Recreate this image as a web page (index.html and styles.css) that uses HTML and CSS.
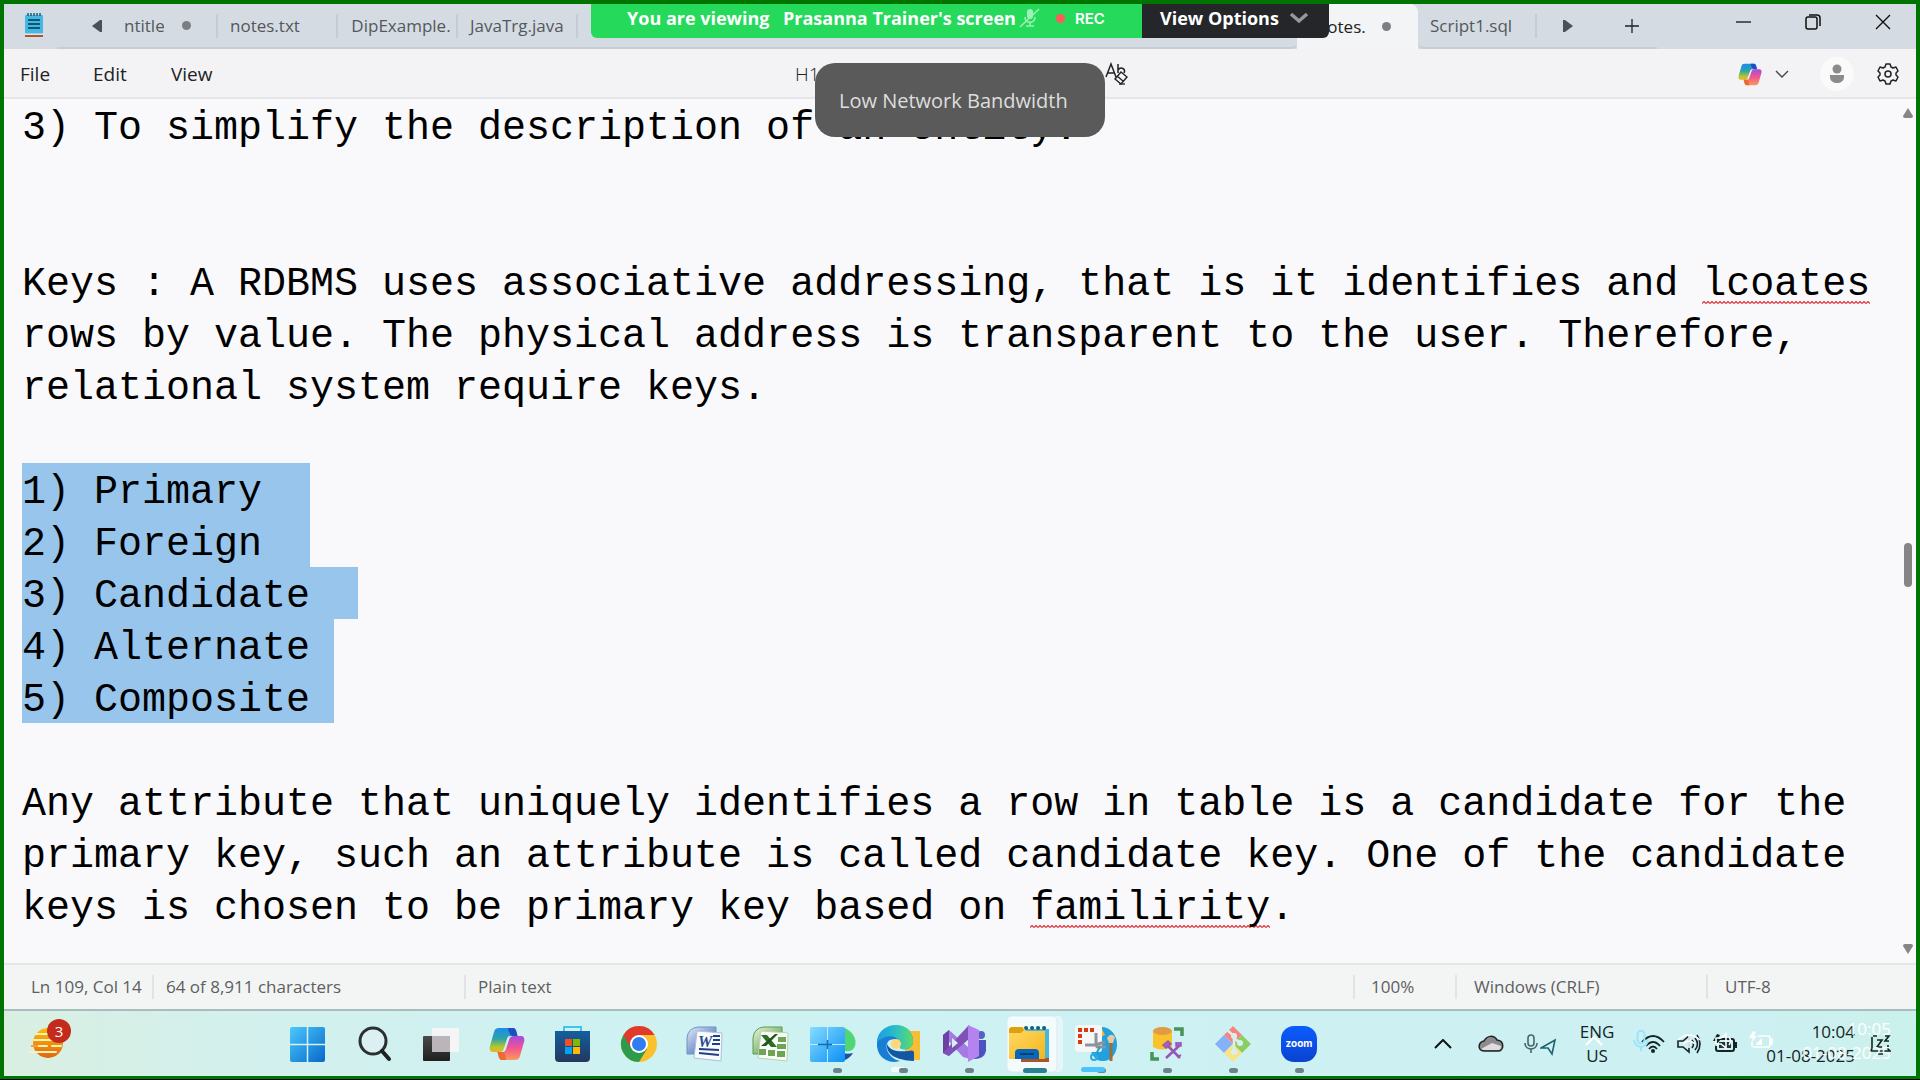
FILE: index.html
```html
<!DOCTYPE html>
<html lang="en">
<head>
<meta charset="utf-8">
<title>notes.txt - Notepad</title>
<link rel="stylesheet" href="styles.css">
</head>
<body>
<svg class="defs" width="0" height="0" aria-hidden="true">
  <defs>
    <linearGradient id="win" x1="0" y1="0" x2="1" y2="1"><stop offset="0" stop-color="#4cc8fb"/><stop offset="1" stop-color="#0669cb"/></linearGradient>
    <linearGradient id="winlight" x1="0" y1="0" x2="1" y2="1"><stop offset="0" stop-color="#86dcff"/><stop offset="1" stop-color="#0b90f5"/></linearGradient>
    <linearGradient id="copa" x1="0" y1="0" x2="0" y2="1"><stop offset="0" stop-color="#1b8de8"/><stop offset=".45" stop-color="#2fa3a8"/><stop offset=".8" stop-color="#b6c92c"/><stop offset="1" stop-color="#e9b52a"/></linearGradient>
    <linearGradient id="copb" x1="0" y1="0" x2="0" y2="1"><stop offset="0" stop-color="#a34be0"/><stop offset=".5" stop-color="#f0568f"/><stop offset="1" stop-color="#fb9a5a"/></linearGradient>
    <linearGradient id="sun" x1="0" y1="0" x2="0" y2="1"><stop offset="0" stop-color="#fcbf0a"/><stop offset="1" stop-color="#e0650f"/></linearGradient>
    <linearGradient id="store" x1="0" y1="0" x2="0" y2="1"><stop offset="0" stop-color="#13609f"/><stop offset="1" stop-color="#25365f"/></linearGradient>
    <linearGradient id="edgeg" x1="0" y1="0" x2="1" y2="0"><stop offset="0" stop-color="#1b9ce2"/><stop offset=".55" stop-color="#2ec0c4"/><stop offset="1" stop-color="#5fdc64"/></linearGradient>
    <linearGradient id="folder" x1="0" y1="0" x2="1" y2="1"><stop offset="0" stop-color="#ffdb66"/><stop offset="1" stop-color="#f5b51c"/></linearGradient>
    <linearGradient id="word" x1="0" y1="0" x2="1" y2="1"><stop offset="0" stop-color="#e2edfa"/><stop offset="1" stop-color="#2a55a8"/></linearGradient>
    <linearGradient id="excel" x1="0" y1="0" x2="1" y2="1"><stop offset="0" stop-color="#eaf6df"/><stop offset="1" stop-color="#3f8a2e"/></linearGradient>
    <linearGradient id="dark" x1="0" y1="0" x2="0" y2="1"><stop offset="0" stop-color="#4a4a4a"/><stop offset="1" stop-color="#1f1f1f"/></linearGradient>
    <linearGradient id="zoomg" x1="0" y1="0" x2="0" y2="1"><stop offset="0" stop-color="#0b5cff"/><stop offset="1" stop-color="#0a43cf"/></linearGradient>
    <symbol id="copilot" viewBox="0 0 36 34">
      <path d="M10 1h14c2 0 3 2 3.500 4l1 4h-7c-2 0-3 1-3.500 3l-3 9c-1 3-2 4-5 4H4c-3 0-4-3-3-6L5 5c1-3 2-4 5-4z" fill="url(#copa)"/>
      <path d="M19 1h5c2 0 3 2 3.500 4l1 4h-5c-3-1-4-5-4.500-8z" fill="#1d4fc0"/>
      <path d="M26 33H13c-2 0-3-2-3.500-4l-1-4h5c2 0 3-1 3.500-3l3-9c1-3 2-4 5-4h7c3 0 4 3 3 6l-4 14c-1 3-2 4-5 4z" fill="url(#copb)"/>
      <path d="M17 33h-4c-2 0-3-2-3.500-4l-1-4h5c3 1 3 5 3.500 8z" fill="#ee6a35"/>
    </symbol>
    <symbol id="mic" viewBox="0 0 14 20">
      <rect x="4" y="1" width="6" height="11" rx="3" fill="none" stroke="currentColor" stroke-width="1.600"/>
      <path d="M1 9c0 8 12 8 12 0M7 15v4" fill="none" stroke="currentColor" stroke-width="1.600"/>
    </symbol>
  </defs>
</svg>

<div class="screen">
  <header class="titlebar">
    <svg class="app-icon" viewBox="0 0 20 26" width="20" height="26"><rect x="1" y="3" width="18" height="19" rx="1" fill="#44b8e0"/><path d="M4 1v3M7 1v3M10 1v3M13 1v3M16 1v3" stroke="#155d7c" stroke-width="1.500"/><path d="M4 8h12M4 12h12M4 16h12" stroke="#0d5877" stroke-width="2"/><path d="M1 22h18" stroke="#eee" stroke-width="1"/><path d="M1 24h18" stroke="#a8582e" stroke-width="2"/></svg>
    <nav class="tabs" aria-label="Open files">
      <button class="scroll-tabs back" aria-label="Scroll tabs left"><svg viewBox="0 0 12 12" width="12" height="12"><path d="M11 0v12H9L1 6 9 0z" fill="#4d5155"/></svg></button>
      <button class="tab t1"><span class="clip">ntitle</span><i class="unsaved"></i></button>
      <button class="tab t2">notes.txt</button>
      <button class="tab t3"><span class="clip">DipExample.</span></button>
      <button class="tab t4">JavaTrg.java</button>
      <span class="tab-fill"></span>
    </nav>
    <button class="tab active"><span class="clip">otes.</span><i class="unsaved"></i></button>
    <div class="tabs right">
      <button class="tab t5">Script1.sql</button>
      <button class="scroll-tabs" aria-label="Scroll tabs right"><svg viewBox="0 0 12 12" width="12" height="12"><path d="M1 0v12h2l8-6-8-6z" fill="#4d5155"/></svg></button>
      <button class="new-tab" aria-label="New tab"><svg viewBox="0 0 16 16" width="16" height="16"><path d="M8 1v14M1 8h14" stroke="#222" stroke-width="1.300"/></svg></button>
    </div>
    <div class="window-controls">
      <button aria-label="Minimize"><svg viewBox="0 0 18 18" width="18" height="18"><path d="M2 9h15" stroke="#111" stroke-width="1.300"/></svg></button>
      <button aria-label="Restore"><svg viewBox="0 0 18 18" width="18" height="18"><rect x="2" y="4" width="11" height="12" rx="2" fill="none" stroke="#111" stroke-width="1.500"/><path d="M5 2h8q3 0 3 3v8" fill="none" stroke="#111" stroke-width="1.500"/></svg></button>
      <button aria-label="Close"><svg viewBox="0 0 18 18" width="18" height="18"><path d="M2 2l14 14M16 2L2 16" stroke="#111" stroke-width="1.400"/></svg></button>
    </div>
  </header>

  <div class="toolbar">
    <button class="menu file">File</button>
    <button class="menu edit">Edit</button>
    <button class="menu view">View</button>
    <div class="format">
      <button class="heading">H1</button>
      <button class="clear" aria-label="Clear formatting"><svg viewBox="0 0 24 24" width="24" height="24"><path d="M1 15L6 2l5 13M3 11h6M13 2v9M13 8c3-4 8-1 6 3" fill="none" stroke="#222" stroke-width="1.500"/><path d="M16 10l6 5-6 7-6-5zM12 14l6 5" fill="none" stroke="#222" stroke-width="1.400"/><path d="M14 22h6" stroke="#222" stroke-width="1.300"/></svg></button>
    </div>
    <div class="tools">
      <button class="copilot" aria-label="Copilot"><svg width="24" height="23"><use href="#copilot"/></svg><svg viewBox="0 0 14 8" width="14" height="8"><path d="M1 1l6 6 6-6" fill="none" stroke="#444" stroke-width="1.400"/></svg></button>
      <button class="account" aria-label="Account"><svg viewBox="0 0 16 20" width="16" height="20"><circle cx="8" cy="5" r="4.500" fill="#8b8b8b"/><path d="M1 11h14v2c0 8-14 8-14 0z" fill="#8b8b8b"/></svg></button>
      <button aria-label="Settings"><svg viewBox="0 0 24 24" width="24" height="24"><path d="M10 2h4l1 3 2 1 3-1 2 4-2 2v2l2 2-2 4-3-1-2 1-1 3h-4l-1-3-2-1-3 1-2-4 2-2v-2L2 9l2-4 3 1 2-1z" fill="none" stroke="#222" stroke-width="1.500" stroke-linejoin="round"/><circle cx="12" cy="12" r="3" fill="none" stroke="#222" stroke-width="1.500"/></svg></button>
    </div>
  </div>

  <main class="editor">
    <div class="text">
      <p>3) To simplify the description of an entity.</p>
      <p><br></p>
      <p><br></p>
      <p>Keys : A RDBMS uses associative addressing, that is it identifies and <span class="typo">lcoates</span> rows by value. The physical address is transparent to the user. Therefore, relational system require keys.</p>
      <p><br></p>
      <p class="selected">1) Primary  </p>
      <p class="selected">2) Foreign  </p>
      <p class="selected">3) Candidate  </p>
      <p class="selected">4) Alternate </p>
      <p class="selected">5) Composite </p>
      <p><br></p>
      <p>Any attribute that uniquely identifies a row in table is a candidate for the primary key, such an attribute is called candidate key. One of the candidate keys is chosen to be primary key based on <span class="typo">familirity</span>.</p>
    </div>
    <div class="scrollbar">
      <svg viewBox="0 0 12 10" width="12" height="10"><path d="M6 0l5 8q0 2-2 2H3q-2 0-2-2z" fill="#868686"/></svg>
      <span class="track"><span class="thumb"></span></span>
      <svg viewBox="0 0 12 10" width="12" height="10"><path d="M6 10l5-8q0-2-2-2H3Q1 0 1 2z" fill="#868686"/></svg>
    </div>
  </main>

  <footer class="status">
    <span class="pos">Ln 109, Col 14</span>
    <span class="count">64 of 8,911 characters</span>
    <span class="kind">Plain text</span>
    <span class="scale">100%</span>
    <span class="eol">Windows (CRLF)</span>
    <span class="enc">UTF-8</span>
  </footer>

  <div class="taskbar">
    <button class="widgets" aria-label="Widgets">
      <svg viewBox="0 0 44 44" width="44" height="44"><circle cx="20" cy="26" r="15" fill="url(#sun)"/><path d="M8 17h14M6 23h24M6 29h13M24 29h9M2 35h26" stroke="#fff0b8" stroke-width="2" stroke-linecap="round"/><path d="M3 29h7" stroke="#f5a23a" stroke-width="2"/></svg>
      <span class="badge">3</span>
    </button>
    <nav class="apps" aria-label="Taskbar">
      <button aria-label="Start"><svg viewBox="0 0 66 64"><rect x="15" y="16" width="35" height="35" rx="2" fill="url(#win)"/><path d="M32.500 16v35M15 33.500h35" stroke="#d3f2f4" stroke-width="1.500"/></svg></button>
      <button aria-label="Search"><svg viewBox="0 0 66 64"><circle cx="32" cy="30" r="13" fill="#dceff2" stroke="#2b2f31" stroke-width="3"/><path d="M41 40l7 8" stroke="#1f2224" stroke-width="4" stroke-linecap="round"/></svg></button>
      <button aria-label="Task view"><svg viewBox="0 0 66 64"><rect x="16" y="25" width="27" height="25" rx="1" fill="url(#dark)"/><rect x="25" y="17" width="27" height="24" rx="1" fill="#f6f5f6"/><path d="M25 25h18v16H25z" fill="#b9b5b8"/></svg></button>
      <button aria-label="Copilot"><svg viewBox="0 0 66 64"><use href="#copilot" x="16" y="16" width="36" height="34"/></svg></button>
      <button aria-label="Microsoft Store"><svg viewBox="0 0 66 64"><path d="M25 21v-5h17v5" fill="none" stroke="#3fc3ef" stroke-width="2"/><path d="M16 20h35v27q0 4-4 4H20q-4 0-4-4z" fill="url(#store)"/><path d="M26 28h7v7h-7z" fill="#f25022"/><path d="M34 28h7v7h-7z" fill="#7fba00"/><path d="M26 36h7v7h-7z" fill="#00a4ef"/><path d="M34 36h7v7h-7z" fill="#ffb900"/></svg></button>
      <button aria-label="Chrome"><svg viewBox="0 0 66 64"><circle cx="34" cy="33" r="18" fill="#fbc02d"/><path d="M34 33L18.400 24A18 18 0 0 0 34 51l8-13z" fill="#2e9a4b"/><path d="M18.400 24A18 18 0 0 1 49.600 24H34v9l-8 4z" fill="#e03a2f"/><circle cx="34" cy="33" r="9" fill="#fff"/><circle cx="34" cy="33" r="7" fill="#2f7df0"/></svg></button>
      <button aria-label="Word"><svg viewBox="0 0 66 64"><path d="M27 16h18v27H16V27q1-10 11-11z" fill="url(#word)" stroke="#6f92c4"/><path d="M26 20l25 2-1 28-27-3z" fill="#f8fafc" stroke="#aac0df"/><path d="M42 25h7M42 29h7M41 33h8M28 38l20 1M28 42l20 2" stroke="#223e82" stroke-width="2"/><text x="27" y="36" class="word-w">W</text></svg></button>
      <button aria-label="Excel"><svg viewBox="0 0 66 64"><path d="M27 16h18v27H16V27q1-10 11-11z" fill="url(#excel)" stroke="#5e9a48"/><path d="M24 20l27 2-1 28-29-3z" fill="#f8fbf6" stroke="#b8d2ae"/><path d="M41 26h8v5h-8zM40 33h9v5h-9zM22 38h7v6h-7zM31 39h7v6h-7zM40 40h8v6h-8z" fill="#6ea453"/><path d="M24 24h6l10 12h-6z" fill="#2d6e24"/><path d="M38 23L24 35h5l12-12z" fill="#1f5619"/></svg></button>
      <button aria-label="Windows apps"><svg viewBox="0 0 66 64"><path d="M42 17c8 4 12 11 10 18-2 5-7 6-10 5z" fill="#4fd675"/><path d="M25 50c11 2 20 0 25-8-7 2-14-1-25-2z" fill="#17529f"/><rect x="7" y="16" width="35" height="35" rx="2" fill="url(#winlight)"/><path d="M24.500 16v35M7 33.500h35" stroke="#b9ecfd"/><path d="M15 33.500h14M24.500 29v9" stroke="#176eae" stroke-width="1.500"/><rect x="30" y="57" width="9" height="5" rx="2.500" fill="#6b8489"/></svg></button>
      <button aria-label="Edge"><svg viewBox="0 0 66 64"><path d="M36 20h15v29H36z" fill="#f7bd35"/><path d="M8 32C9 10 44 8 44 30c0 8-8 10-13 7 0-8-5-10-10-8-7 4-3 18 10 21C17 54 7 44 8 32z" fill="#187ed5"/><path d="M8 31C9 9 44 8 44 30c0 8-8 10-13 7 3-9-9-18-23-6z" fill="url(#edgeg)"/><path d="M18 33c-1 10 8 16 27 17v-8c0-3-2-3-6-2-10 1-18 0-21-7z" fill="#1257a4"/><circle cx="27" cy="33" r="5" fill="#ffd777"/><rect x="22" y="56" width="14" height="5" rx="2.500" fill="#f4fbfc"/><rect x="30" y="57" width="9" height="5" rx="2.500" fill="#6b8489"/></svg></button>
      <button aria-label="Visual Studio"><svg viewBox="0 0 66 64"><circle cx="46" cy="24" r="4" fill="#5661c7"/><path d="M42 29h9v11q-2 9-14 8z" fill="#4a52bd"/><path d="M8 24l6-5 20 18 1 11-7-2z" fill="#a57be3"/><path d="M8 24v18l6 3V19z" fill="#6d41a3"/><path d="M14 45l20-17V14L8 42z" fill="#8051b9"/><path d="M33 14l11 5v26l-11 6z" fill="#b483ef"/><path d="M17 27v10l6-5z" fill="#d5f1f3"/><rect x="30" y="57" width="9" height="5" rx="2.500" fill="#6b8489"/></svg></button>
      <button aria-label="File Explorer"><svg viewBox="0 0 66 64"><rect x="12" y="5" width="50" height="56" rx="5" fill="#e5f6f8"/><rect x="6" y="5" width="50" height="56" rx="5" fill="#f4fbfd" stroke="#d9ebee"/><path d="M20 18h28v30H20z" fill="#45b7dd"/><path d="M20 49h28" stroke="#a8552c" stroke-width="4"/><path d="M25 17h.1M31 17h.1M37 17h.1M43 17h.1" stroke="#165f80" stroke-width="4" stroke-linecap="round"/><path d="M10 16h12l3 4h19v28H8V18z" fill="url(#folder)"/><path d="M10 16h11l2 3-3 3H8v-4z" fill="#dfa009"/><path d="M14 48v-6q0-4 4-4h16q4 0 4 4v6z" fill="#0967b8"/><path d="M19 43h14" stroke="#063f76" stroke-width="2"/><rect x="22" y="57" width="24" height="5" rx="2.500" fill="#2b8190"/></svg></button>
      <button aria-label="Snipping Tool"><svg viewBox="0 0 66 64"><path d="M29 17c10-4 22 4 21 18-1 10-8 16-15 15-7 0-12-8-12-16z" fill="#23a0df"/><path d="M35 18l3 6-5 2z" fill="#f4ba23"/><path d="M44 50V28" stroke="#a76b31" stroke-width="3"/><path d="M40 27q4-6 8-1l-2 6h-4z" fill="#e8c99d"/><rect x="8" y="14" width="27" height="27" rx="3" fill="#f5f6f7"/><path d="M11 17h4v4h-4zM17 17h4v4h-4zM23 17h4v4h-4zM11 23h4v4h-4zM11 29h4v4h-4z" fill="#d33c11"/><path d="M29 22v11q0 4 4 3h6M18 34h10l10-3" fill="none" stroke="#8d959a" stroke-width="3"/><circle cx="27" cy="46" r="3" fill="none" stroke="#2aaae3" stroke-width="2"/><path d="M29 43l4-7" stroke="#279bd7" stroke-width="2"/><rect x="30" y="57" width="9" height="5" rx="2.500" fill="#6b8489"/><rect x="14" y="56" width="24" height="5" rx="2.500" fill="#4cc2ff"/></svg></button>
      <button aria-label="SQL Server Management Studio"><svg viewBox="0 0 66 64"><path d="M20 20v16q9 5 19 0V20z" fill="#f9c42a"/><ellipse cx="29.500" cy="20" rx="9.500" ry="4" fill="#e39a46"/><path d="M41 18h8v7M19 41v7h7" fill="none" stroke="#459457" stroke-width="3.500"/><path d="M33 47l13-12M34 34l13 13" stroke="#9556b6" stroke-width="2.500"/><path d="M30 34l5-4 3 3-5 4zM43 31v4h5v-4M44 46l4-2" fill="#a561c3" stroke="#9556b6" stroke-width="1.500"/><rect x="30" y="57" width="9" height="5" rx="2.500" fill="#6b8489"/></svg></button>
      <button aria-label="Git"><svg viewBox="0 0 66 64"><path d="M34 15l9 9-9 9-9-9z" fill="#fa837f"/><path d="M25 24l9 9-9 9-9-9z" fill="#86b0f7"/><path d="M43 24l9 9-9 9-9-9z" fill="#8bce61"/><path d="M34 33l9 9-9 9-9-9z" fill="#fae286"/><path d="M28 19l7 6v16M35 27l6 5" fill="none" stroke="#d7f0ef" stroke-width="2.500"/><path d="M35 25h.1M41 32h.1M35 41h.1" stroke="#d7f0ef" stroke-width="6" stroke-linecap="round"/><rect x="30" y="57" width="9" height="5" rx="2.500" fill="#6b8489"/></svg></button>
      <button aria-label="Zoom"><svg viewBox="0 0 66 64"><rect x="16" y="15" width="36" height="36" rx="13" fill="url(#zoomg)"/><text x="34" y="36" class="zoom-word">zoom</text><rect x="30" y="57" width="9" height="5" rx="2.500" fill="#6b8489"/></svg></button>
    </nav>
    <div class="tray">
      <button aria-label="Hidden icons"><svg viewBox="0 0 18 10" width="18" height="10"><path d="M1 9l8-8 8 8" fill="none" stroke="#111" stroke-width="2"/></svg></button>
      <button class="cloud" aria-label="OneDrive"><svg viewBox="0 0 26 18" width="26" height="18"><path d="M6 6c3-6 10-6 13-1 8 1 7 11 1 11H6C-1 16 0 7 6 6z" fill="#8e8b90" stroke="#222" stroke-width="1.500"/><path d="M3 14l11-6 9 3q0 4-3 4H6z" fill="#dedee1"/></svg></button>
      <button class="inuse" aria-label="Microphone and location in use"><svg width="14" height="20" color="#47656d"><use href="#mic"/></svg><svg class="location" viewBox="0 0 17 18" width="17" height="18"><path d="M1 10L15 2l-3 14-4-6z" fill="none" stroke="#20636e" stroke-width="1.600"/></svg></button>
      <button class="lang">ENG<br>US</button>
      <button class="system" aria-label="Network, volume and battery">
        <svg viewBox="0 0 24 20" width="24" height="20"><path d="M1 8q11-12 22 0M5 12q7-8 14 0M8 15q4-5 8 0" fill="none" stroke="#152427" stroke-width="1.800"/><circle cx="12" cy="17" r="2" fill="#152427"/></svg>
        <svg viewBox="0 0 24 20" width="24" height="20"><path d="M1 7h5l6-5v16l-6-5H1zM15 6q3 4 0 8M18 4q5 6 0 12M20 1q6 9 0 18" fill="none" stroke="#152427" stroke-width="1.600"/></svg>
        <svg viewBox="0 0 24 20" width="24" height="20"><path d="M7 5h12q2 0 2 2v8q0 2-2 2H5q-2 0-2-2v-3M22 9h1v4h-1" fill="none" stroke="#152427" stroke-width="2"/><path d="M6 8h12v6H6z" fill="#23343a"/><path d="M4 0L0 7h4l-2 5 6-7H5l2-4z" fill="#152427"/></svg>
      </button>
      <button class="clock">10:04<br>01-08-2025</button>
      <button class="bell" aria-label="Notifications"><svg viewBox="0 0 22 22" width="22" height="22"><path d="M4 3h4M3 4v12l-2 2h20l-2-2V12M9 21h5" fill="none" stroke="#152427" stroke-width="1.600"/><path d="M8 7h5l-5 7h5M16 3h4l-4 5h4" fill="none" stroke="#152427" stroke-width="1.600"/></svg></button>
      <div class="ghost" aria-hidden="true">
        <svg class="g-chevron" viewBox="0 0 18 10" width="18" height="10"><path d="M1 9l8-8 8 8" fill="none" stroke="#fff" stroke-width="2"/></svg>
        <svg class="g-mic" width="16" height="24" color="#98e5fc"><use href="#mic"/></svg>
        <svg viewBox="0 0 24 20" width="24" height="20"><path d="M1 9q11-10 22 0M6 13q6-6 12 0M12 3v14" fill="none" stroke="#fff" stroke-width="1.600"/></svg>
        <svg viewBox="0 0 24 20" width="24" height="20"><path d="M3 7h5l5-4v14l-5-4H3zM16 6q3 4 0 8" fill="none" stroke="#fff" stroke-width="1.600"/></svg>
        <svg viewBox="0 0 24 20" width="24" height="20"><path d="M9 5h10q2 0 2 2v7q0 2-2 2H5q-2 0-2-2v-3M22 8h1v5h-1" fill="none" stroke="#fff" stroke-width="1.600"/><path d="M6 14l7-7v7zM4 0L0 7h4l-2 5 6-7H5l2-4z" fill="#fff"/></svg>
        <span class="g-clock">10:05<br>01-08-2025</span>
      </div>
    </div>
  </div>

  <div class="share">
    <div class="viewing"><span class="lead">You are viewing</span><span class="who">Prasanna Trainer's screen</span>
      <svg viewBox="0 0 22 20" width="22" height="20"><rect x="8" y="1" width="6" height="10" rx="3" fill="#9df0b6"/><path d="M6 9c0 7 10 7 10 0M11 14v4M7 18h8M1 19L20 1" fill="none" stroke="#9df0b6" stroke-width="1.600"/></svg>
      <i class="rec-dot"></i><span class="rec">REC</span></div>
    <button class="options">View Options<svg viewBox="0 0 20 12" width="20" height="12"><path d="M2 2l8 7 8-7" fill="none" stroke="#96979a" stroke-width="3.500"/></svg></button>
  </div>
  <div class="toast" role="status">Low Network Bandwidth</div>
</div>
</body>
</html>
```
FILE: styles.css
```css
* { box-sizing: border-box; }
body { margin: 0; background: #000; font-family: "Open Sans", "Noto Sans", sans-serif; color: #222; }
button { border: 0; margin: 0; padding: 0; background: none; font: inherit; color: inherit; display: flex; align-items: center; white-space: nowrap; }
svg { display: block; flex: none; }
p { margin: 0; }
.defs { position: absolute; }

.screen { position: relative; display: flex; flex-direction: column; min-height: calc(100vh - 1px); border: 4px solid #007400; border-bottom-width: 3px; background: #f9f8fb; overflow: hidden; }

/* title bar */
.titlebar { display: flex; height: 45px; background: #d4dbe2; font-size: 17px; color: #54585c; }
.app-icon { margin: 8px 13px 0 20px; }
.tabs { display: flex; flex: 1; align-items: center; border-bottom: 2px solid #c6cdd3; border-bottom-right-radius: 6px; }
.tabs.right { flex: none; width: 239px; border-bottom-left-radius: 6px; border-bottom-right-radius: 0; }
.tab { position: relative; height: 24px; border-right: 2px solid #c5ccd3; padding-left: 12px; }
.scroll-tabs.back { width: 64px; padding-left: 34px; }
.clip { overflow: hidden; }
.unsaved { width: 9px; height: 9px; border-radius: 50%; background: #7b7f83; }
.t1 { width: 97px; padding-left: 3px; }
.t1 .clip { width: 40px; margin-right: 18px; }
.t2 { width: 120px; }
.t3 { width: 120px; }
.t3 .clip { width: 102px; }
.t4 { width: 120px; }
.tab-fill { flex: 1; }
.tab.active { width: 121px; height: 45px; padding-left: 29px; border: 0; background: #f3f4f6; border-radius: 8px 8px 0 0; color: #222; }
.tab.active .clip { width: 41px; margin-right: 15px; }
.t5 { width: 119px; }
.tabs.right .scroll-tabs { margin-left: 25px; }
.new-tab { margin-left: 50px; }
.window-controls { display: flex; align-items: flex-start; gap: 52px; padding: 9px 24px 0 77px; }

/* menu and formatting bar */
.toolbar { display: flex; align-items: center; height: 50px; padding: 2px 16px 0 0; background: #f3f3f5; border-bottom: 2px solid #e5e6e9; font-size: 19px; }
.file { width: 74px; padding-left: 16px; }
.edit { width: 76px; padding-left: 15px; }
.view { width: 76px; padding-left: 17px; }
.format { display: flex; gap: 286px; margin-left: 565px; }
.heading { font-weight: 300; width: 24px; }
.tools { display: flex; align-items: center; margin-left: auto; }
.copilot { gap: 13px; }
.account { margin: 0 22px 0 31px; width: 34px; height: 34px; justify-content: center; border-radius: 50%; background: #fafafb; }

/* document */
.editor { display: flex; flex: 1; }
.text { flex: 1; padding: 4px 10px 26px 18px; font: 40px/52px "Liberation Mono", monospace; color: #000; }
.selected { width: fit-content; margin-top: -4px; padding-top: 4px; background: linear-gradient(#98c5ec, #98c5ec) top / 100% 52px no-repeat; white-space: pre; }
.typo { background: url("data:image/svg+xml,%3Csvg xmlns='http://www.w3.org/2000/svg' width='4' height='3'%3E%3Cpath d='M0 2.500L2 .5 4 2.500' fill='none' stroke='%23e0343c' stroke-width='1.200'/%3E%3C/svg%3E") 0 calc(100% - 3px) repeat-x; }
.scrollbar { display: flex; flex-direction: column; align-items: center; width: 16px; padding: 9px 0 9px; }
.track { display: flex; flex: 1; align-items: center; padding-top: 68px; }
.thumb { width: 8px; height: 44px; border-radius: 4px; background: #858585; }

/* status bar */
.status { display: flex; align-items: center; height: 48px; border-top: 2px solid #e5e6e8; border-bottom: 2px solid #a9bcbe; background: #f3f4f4; font-size: 17px; color: #5d5f61; }
.status span { height: 24px; line-height: 24px; padding-left: 12px; border-left: 2px solid #e1e3e4; white-space: nowrap; }
.status .pos { width: 148px; padding-left: 27px; border-left: 0; }
.status .count { flex: none; width: 312px; }
.status .kind { flex: 1; }
.status .scale { width: 102px; padding-left: 16px; }
.status .eol { width: 251px; padding-left: 17px; }
.status .enc { width: 210px; padding-left: 17px; }

/* taskbar */
.taskbar { display: flex; height: 65px; background: linear-gradient(90deg, #d9efe2, #d2f0ee 14%, #cef2f2 35%, #cdf0f3 90%, #cbf1eb); }
.widgets { position: relative; width: 271px; padding: 0 0 9px 24px; }
.badge { position: absolute; left: 43px; top: 8px; width: 24px; height: 24px; border-radius: 50%; background: #c42b1c; color: #fff; font-size: 15px; line-height: 24px; text-align: center; }
.apps { display: flex; }
.apps button, .apps svg { width: 66px; height: 64px; }
.word-w { font: italic bold 16px "Liberation Serif", serif; fill: #2a4a8e; }
.zoom-word { font: bold 10px Inter, sans-serif; fill: #fff; text-anchor: middle; }
.tray { position: relative; display: flex; flex: 1; align-items: center; justify-content: flex-end; padding-right: 25px; font-size: 17px; line-height: 24px; color: #152427; }
.cloud { margin: 0 20px 0 26px; }
.inuse { gap: 2px; }
.location { margin-top: 6px; }
.lang { width: 84px; padding-right: 4px; justify-content: center; text-align: center; }
.system { gap: 12px; }
.clock { width: 118px; justify-content: flex-end; text-align: right; }
.bell { margin-left: 14px; }
.ghost { position: absolute; right: 25px; top: 6px; display: flex; align-items: center; color: #fff; }
.g-chevron { margin-right: 30px; }
.g-mic { margin-right: 28px; }
.ghost svg + svg + svg { margin-right: 12px; }
.g-clock { width: 106px; text-align: right; }

/* screen-share overlays */
.share { position: absolute; top: -4px; left: 587px; display: flex; height: 38px; border-radius: 0 0 6px 6px; overflow: hidden; font-size: 18px; font-weight: 700; color: #fff; }
.viewing { display: flex; align-items: center; width: 551px; padding: 0 0 2px 36px; background: #25d95b; white-space: nowrap; }
.lead { width: 156px; }
.who { width: 236px; }
.rec-dot { width: 9px; height: 9px; margin: 0 10px 0 15px; border-radius: 50%; background: #ff5b5b; }
.rec { font: 600 15px Inter, sans-serif; }
.options { gap: 10px; width: 187px; padding: 0 0 2px 18px; background: #242629; }
.toast { position: absolute; top: 59px; left: 811px; padding: 23px 24px 21px; border-radius: 20px; background: #5a5a5a; color: #dedede; font-size: 20px; line-height: 30px; width: 290px; white-space: nowrap; }
```
